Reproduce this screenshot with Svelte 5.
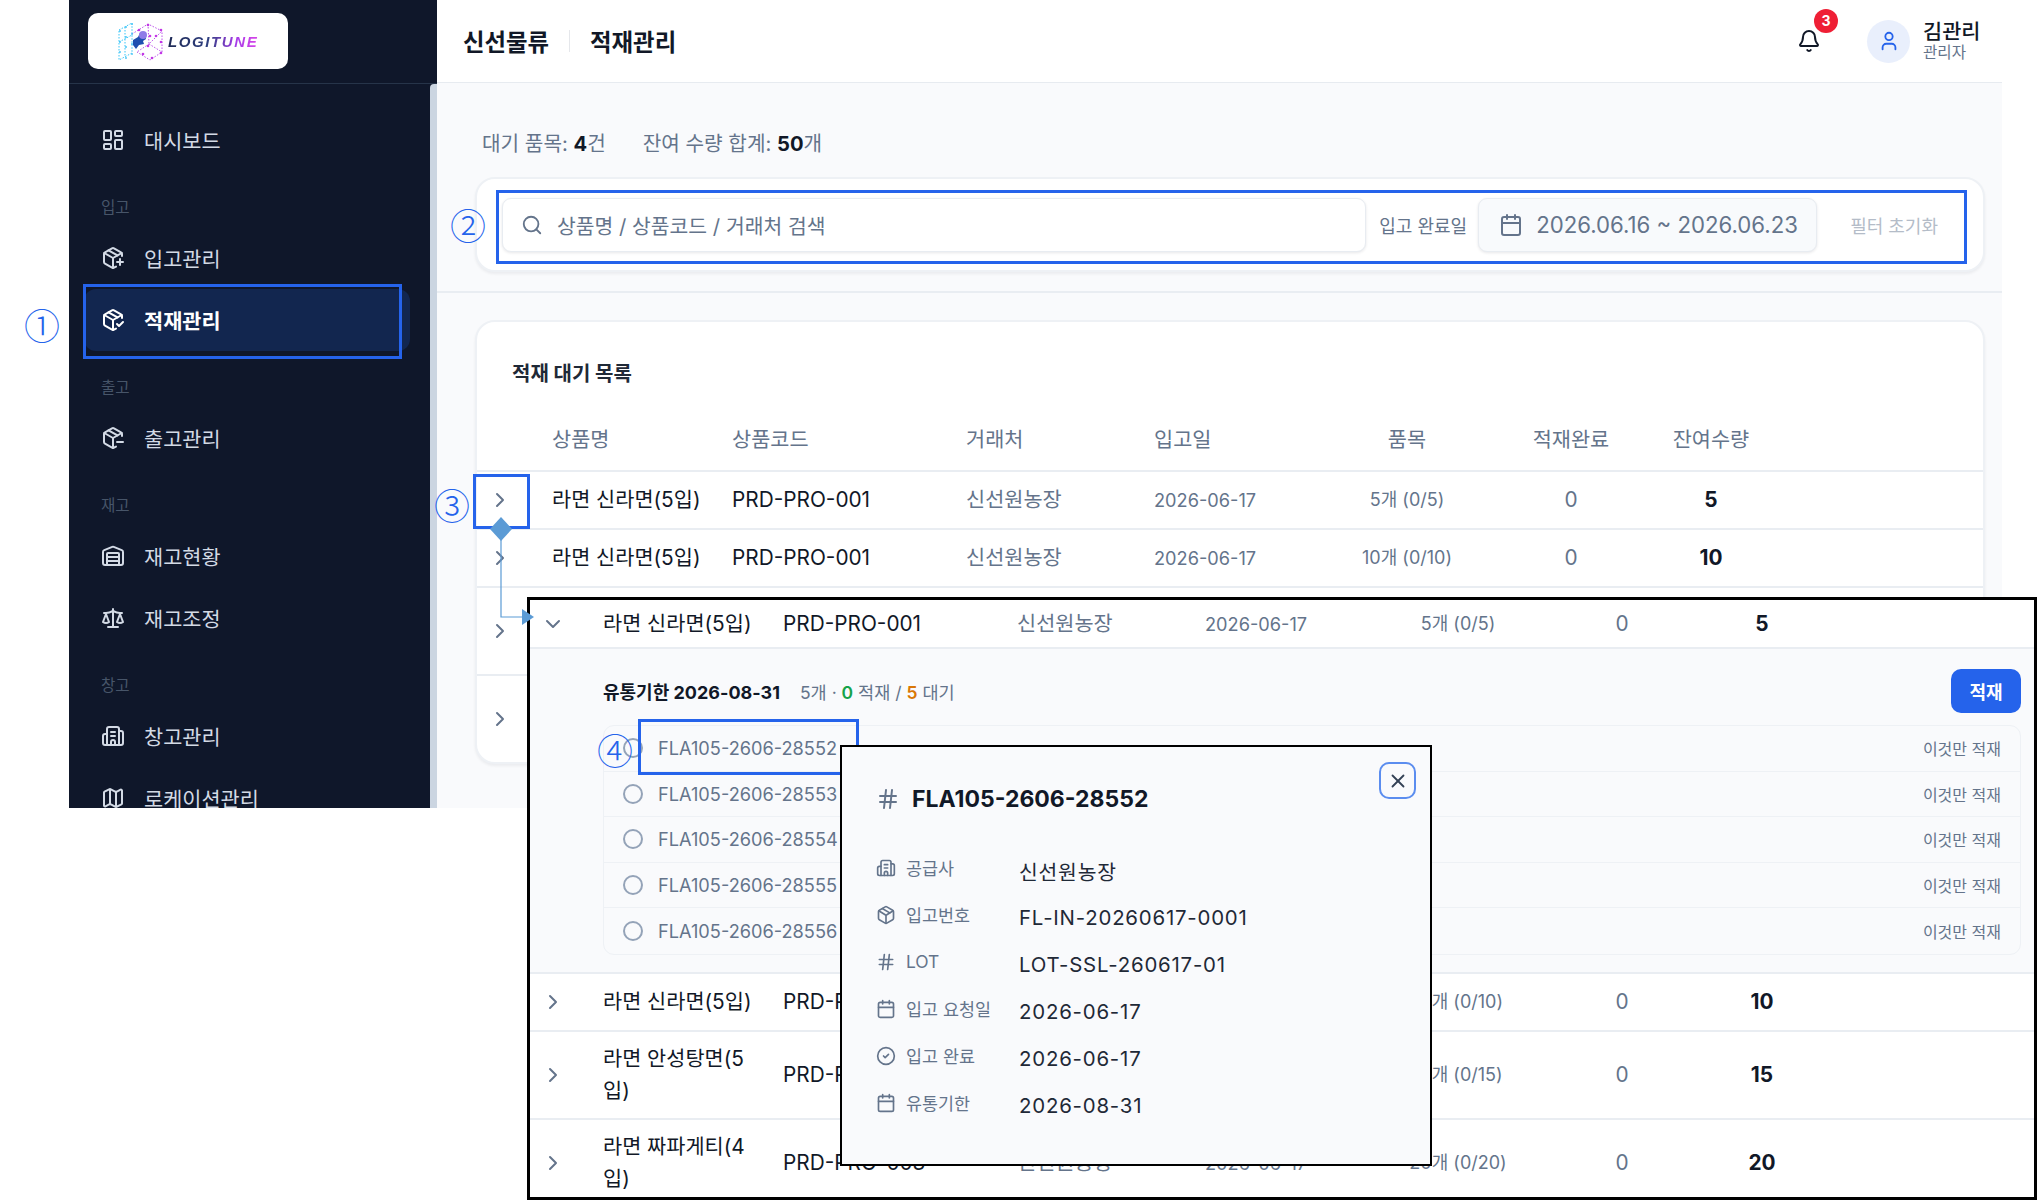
<script lang="ts">
    const paths: Record<string, string> = {
        dashboard: '<rect width="7" height="9" x="3" y="3" rx="1"/><rect width="7" height="5" x="14" y="3" rx="1"/><rect width="7" height="9" x="14" y="12" rx="1"/><rect width="7" height="5" x="3" y="16" rx="1"/>',
        packagePlus: '<path d="M16 16h6"/><path d="M19 13v6"/><path d="M21 10V8a2 2 0 0 0-1-1.73l-7-4a2 2 0 0 0-2 0l-7 4A2 2 0 0 0 3 8v8a2 2 0 0 0 1 1.73l7 4a2 2 0 0 0 2 0l2-1.14"/><path d="m7.5 4.27 9 5.15"/><polyline points="3.29 7 12 12 20.71 7"/><line x1="12" x2="12" y1="22" y2="12"/>',
        packageCheck: '<path d="m16 16 2 2 4-4"/><path d="M21 10V8a2 2 0 0 0-1-1.73l-7-4a2 2 0 0 0-2 0l-7 4A2 2 0 0 0 3 8v8a2 2 0 0 0 1 1.73l7 4a2 2 0 0 0 2 0l2-1.14"/><path d="m7.5 4.27 9 5.15"/><polyline points="3.29 7 12 12 20.71 7"/><line x1="12" x2="12" y1="22" y2="12"/>',
        packageMinus: '<path d="M16 16h6"/><path d="M21 10V8a2 2 0 0 0-1-1.73l-7-4a2 2 0 0 0-2 0l-7 4A2 2 0 0 0 3 8v8a2 2 0 0 0 1 1.73l7 4a2 2 0 0 0 2 0l2-1.14"/><path d="m7.5 4.27 9 5.15"/><polyline points="3.29 7 12 12 20.71 7"/><line x1="12" x2="12" y1="22" y2="12"/>',
        package: '<path d="M11 21.73a2 2 0 0 0 2 0l7-4A2 2 0 0 0 21 16V8a2 2 0 0 0-1-1.73l-7-4a2 2 0 0 0-2 0l-7 4A2 2 0 0 0 3 8v8a2 2 0 0 0 1 1.73z"/><path d="M12 22V12"/><path d="m3.3 7 7.703 4.734a2 2 0 0 0 1.994 0L20.7 7"/><path d="m7.5 4.27 9 5.15"/>',
        warehouse: '<path d="M18 21V10a1 1 0 0 0-1-1H7a1 1 0 0 0-1 1v11"/><path d="M22 19a2 2 0 0 1-2 2H4a2 2 0 0 1-2-2V8a2 2 0 0 1 1.26-1.86l8-3.2a2 2 0 0 1 1.48 0l8 3.2A2 2 0 0 1 22 8z"/><path d="M6 13h12"/><path d="M6 17h12"/>',
        scale: '<path d="m16 16 3-8 3 8c-.87.65-1.92 1-3 1s-2.13-.35-3-1Z"/><path d="m2 16 3-8 3 8c-.87.65-1.92 1-3 1s-2.13-.35-3-1Z"/><path d="M7 21h10"/><path d="M12 3v18"/><path d="M3 7h2c2 0 5-1 7-2 2 1 5 2 7 2h2"/>',
        building: '<path d="M10 12h4"/><path d="M10 8h4"/><path d="M14 21v-3a2 2 0 0 0-4 0v3"/><path d="M6 10H4a2 2 0 0 0-2 2v7a2 2 0 0 0 2 2h16a2 2 0 0 0 2-2V9a2 2 0 0 0-2-2h-2"/><path d="M6 21V5a2 2 0 0 1 2-2h8a2 2 0 0 1 2 2v16"/>',
        map: '<path d="M14.106 5.553a2 2 0 0 0 1.788 0l3.659-1.83A1 1 0 0 1 21 4.619v12.764a1 1 0 0 1-.553.894l-4.553 2.277a2 2 0 0 1-1.788 0l-4.212-2.106a2 2 0 0 0-1.788 0l-3.659 1.83A1 1 0 0 1 3 19.381V6.618a1 1 0 0 1 .553-.894l4.553-2.277a2 2 0 0 1 1.788 0z"/><path d="M15 5.764v15"/><path d="M9 3.236v15"/>',
        search: '<circle cx="11" cy="11" r="8"/><path d="m21 21-4.3-4.3"/>',
        calendar: '<path d="M8 2v4"/><path d="M16 2v4"/><rect width="18" height="18" x="3" y="4" rx="2"/><path d="M3 10h18"/>',
        bell: '<path d="M10.268 21a2 2 0 0 0 3.464 0"/><path d="M3.262 15.326A1 1 0 0 0 4 17h16a1 1 0 0 0 .74-1.673C19.41 13.956 18 12.499 18 8A6 6 0 0 0 6 8c0 4.499-1.411 5.956-2.738 7.326"/>',
        user: '<path d="M19 21v-2a4 4 0 0 0-4-4H9a4 4 0 0 0-4 4v2"/><circle cx="12" cy="7" r="4"/>',
        hash: '<line x1="4" x2="20" y1="9" y2="9"/><line x1="4" x2="20" y1="15" y2="15"/><line x1="10" x2="8" y1="3" y2="21"/><line x1="16" x2="14" y1="3" y2="21"/>',
        x: '<path d="M18 6 6 18"/><path d="m6 6 12 12"/>',
        right: '<path d="m9 18 6-6-6-6"/>',
        down: '<path d="m6 9 6 6 6-6"/>',
        check: '<circle cx="12" cy="12" r="10"/><path d="m9 12 2 2 4-4"/>'
    };

    const nav = [
        { label: "대시보드", icon: "dashboard" },
        { group: "입고" },
        { label: "입고관리", icon: "packagePlus" },
        { label: "적재관리", icon: "packageCheck", active: true },
        { group: "출고" },
        { label: "출고관리", icon: "packageMinus" },
        { group: "재고" },
        { label: "재고현황", icon: "warehouse" },
        { label: "재고조정", icon: "scale" },
        { group: "창고" },
        { label: "창고관리", icon: "building" },
        { label: "로케이션관리", icon: "map" }
    ];

    const items = [
        { name: "라면 신라면(5입)", code: "PRD-PRO-001", qty: 5 },
        { name: "라면 신라면(5입)", code: "PRD-PRO-001", qty: 10 },
        { name: "라면 안성탕면(5입)", code: "PRD-PRO-002", qty: 15 },
        { name: "라면 짜파게티(4입)", code: "PRD-PRO-003", qty: 20 }
    ];

    const lots = ["28552", "28553", "28554", "28555", "28556"];

    const details = [
        { label: "공급사", icon: "building", value: "신선원농장" },
        { label: "입고번호", icon: "package", value: "FL-IN-20260617-0001" },
        { label: "LOT", icon: "hash", value: "LOT-SSL-260617-01" },
        { label: "입고 요청일", icon: "calendar", value: "2026-06-17" },
        { label: "입고 완료", icon: "check", value: "2026-06-17" },
        { label: "유통기한", icon: "calendar", value: "2026-08-31" }
    ];

    // 로고 격자의 점
    const leftDots = [[3, 9], [3, 20], [3, 30], [9, 5], [9, 15], [9, 25], [9, 36], [15, 2], [15, 12], [15, 22], [15, 32]];
    const rightDots = [[22, 8], [26, 32], [31, 3], [31, 24], [35, 36], [39, 14], [44, 8], [44, 20], [44, 31], [33, 14]];
</script>

{#snippet icon(name: string, cls: string)}
    <svg class="icon {cls}" viewBox="0 0 24 24" fill="none" stroke="currentColor" stroke-width="2" stroke-linecap="round" stroke-linejoin="round">{@html paths[name]}</svg>
{/snippet}

{#snippet row(item: typeof items[number], open: boolean)}
    <div class="row">
        <span class="chev">{@render icon(open ? "down" : "right", "i24")}</span>
        <span class="name">{item.name}</span>
        <span class="code">{item.code}</span>
        <span class="vendor">신선원농장</span>
        <span class="date">2026-06-17</span>
        <span class="ctr qty">{item.qty}개 (0/{item.qty})</span>
        <span class="ctr done">0</span>
        <span class="ctr rest">{item.qty}</span>
    </div>
{/snippet}

<div class="stage">
    <div class="app">
        <aside class="sidebar">
            <div class="brand">
                <div class="logo">
                    <svg class="cube" viewBox="0 0 46 39" fill="none">
                        <path stroke="#38c6f8" stroke-width="1" stroke-dasharray="1.5 1.5" d="M2 8 15 1V31L2 38ZM2 20 15 13M8 5V34" />
                        <path stroke="#bb55ea" stroke-width="1" stroke-dasharray="1.5 1.5" d="M15 12 31 2 45 9V30L33 38 20 30M31 2 32 22 45 9M32 22 20 30M32 22 45 30" />
                        {#each leftDots as [cx, cy]}
                            <circle {cx} {cy} r="0.9" fill="#3fc4f7" />
                        {/each}
                        {#each rightDots as [cx, cy]}
                            <circle {cx} {cy} r="1.3" fill="#c237e6" />
                        {/each}
                        <path fill="#1f4fb0" d="M16 18l5-3 2-4 5 1 1 5-3 2 1 3-5 1-3 4-3-4z" />
                        <circle cx="26" cy="13" r="4" fill="#8f7ce8" />
                    </svg>
                    <span class="wordmark">LOGITUNE</span>
                </div>
            </div>
            <div class="navwrap">
                <nav class="nav">
                    {#each nav as entry}
                        {#if entry.group}
                            <div class="group">{entry.group}</div>
                        {:else}
                            <div class="item" class:active={entry.active}>
                                {@render icon(entry.icon ?? "", "i24")}
                                <span>{entry.label}</span>
                            </div>
                        {/if}
                    {/each}
                </nav>
                <div class="scrollbar"></div>
            </div>
        </aside>

        <main class="main">
            <header class="topbar">
                <div class="crumbs">
                    <span>신선물류</span>
                    <i></i>
                    <span>적재관리</span>
                </div>
                <div class="bell">
                    {@render icon("bell", "i24")}
                    <b class="badge">3</b>
                </div>
                <div class="avatar">{@render icon("user", "i22")}</div>
                <div class="who">
                    <strong>김관리</strong>
                    <small>관리자</small>
                </div>
            </header>

            <section class="filters">
                <div class="stats">
                    <span>대기 품목: <b>4</b>건</span>
                    <span>잔여 수량 합계: <b>50</b>개</span>
                </div>
                <div class="filtercard">
                    <div class="search">
                        {@render icon("search", "i22")}
                        <span>상품명 / 상품코드 / 거래처 검색</span>
                    </div>
                    <span class="flabel">입고 완료일</span>
                    <div class="range">
                        {@render icon("calendar", "i24")}
                        <span>2026.06.16 ~ 2026.06.23</span>
                    </div>
                    <span class="reset">필터 초기화</span>
                </div>
            </section>

            <section class="tablewrap">
                <div class="tablecard">
                    <h2>적재 대기 목록</h2>
                    <div class="row head">
                        <span></span>
                        <span>상품명</span>
                        <span>상품코드</span>
                        <span>거래처</span>
                        <span>입고일</span>
                        <span class="ctr">품목</span>
                        <span class="ctr">적재완료</span>
                        <span class="ctr">잔여수량</span>
                    </div>
                    {#each items as item}
                        {@render row(item, false)}
                    {/each}
                </div>
            </section>
        </main>
    </div>

    <!-- 확대 패널 -->
    <div class="panel">
        {@render row(items[0], true)}
        <div class="expand">
            <div class="expandhead">
                <strong>유통기한 2026-08-31</strong>
                <span class="counts">5개 · <em class="green">0</em> 적재 / <em class="orange">5</em> 대기</span>
                <button class="stack">적재</button>
            </div>
            <div class="lots">
                {#each lots as lot}
                    <div class="lot">
                        <span class="radio"></span>
                        <span class="lotno">FLA105-2606-{lot}</span>
                        <span class="only">이것만 적재</span>
                    </div>
                {/each}
            </div>
        </div>
        {#each items.slice(1) as item}
            {@render row(item, false)}
        {/each}
    </div>

    <!-- 주석 표시 -->
    <span class="box b1"></span>
    <span class="box b2"></span>
    <span class="box b3"></span>
    <span class="box b4"></span>
    <span class="num n1">①</span>
    <span class="num n2">②</span>
    <span class="num n3">③</span>
    <span class="num n4">④</span>
    <svg class="connector" viewBox="0 0 48 110" fill="none">
        <path d="M14 12V100H40" stroke="#5b9bd5" stroke-width="1.2" />
        <path d="M14 0 25 12 14 24 3 12Z" fill="#5b9bd5" />
        <path d="M35 92 47 100 35 108Z" fill="#5b9bd5" />
    </svg>

    <div class="modal">
        <button class="close">{@render icon("x", "i22")}</button>
        <div class="mtitle">
            {@render icon("hash", "i24")}
            <span>FLA105-2606-28552</span>
        </div>
        <dl class="mrows">
            {#each details as d}
                <dt>{@render icon(d.icon, "i20")}{d.label}</dt>
                <dd>{d.value}</dd>
            {/each}
        </dl>
    </div>
</div>

<style>
    :global(body) {
        margin: 0;
        background: #fff;
    }

    .stage {
        position: relative;
        width: 2037px;
        height: 1200px;
        overflow: hidden;
        font-family: Inter, "Noto Sans CJK KR", sans-serif;
        color: #111827;
    }

    .icon {
        display: block;
        flex: none;
    }
    .i20 { width: 20px; height: 20px; }
    .i22 { width: 22px; height: 22px; }
    .i24 { width: 24px; height: 24px; }

    .app {
        display: flex;
        width: 1933px;
        height: 808px;
        margin-left: 69px;
        overflow: hidden;
    }

    /* sidebar */
    .sidebar {
        width: 368px;
        flex: none;
        display: flex;
        flex-direction: column;
        background: #0f172a;
    }
    .brand {
        height: 84px;
        flex: none;
        box-sizing: border-box;
        padding: 13px 0 0 19px;
        border-bottom: 1px solid #263449;
    }
    .logo {
        width: 200px;
        height: 56px;
        box-sizing: border-box;
        padding-left: 29px;
        display: flex;
        align-items: center;
        gap: 5px;
        background: #fff;
        border-radius: 10px;
    }
    .cube {
        width: 46px;
        height: 39px;
    }
    .wordmark {
        font-family: "Liberation Sans", sans-serif;
        font-size: 15px;
        font-weight: 700;
        font-style: italic;
        letter-spacing: 1.6px;
        background: linear-gradient(90deg, #1e2a55 0%, #2f3f80 45%, #a53be8 75%, #d845e8 100%);
        -webkit-background-clip: text;
        background-clip: text;
        color: transparent;
    }
    .navwrap {
        flex: 1;
        display: flex;
        min-height: 0;
    }
    .nav {
        flex: 1;
        padding: 25px 20px 0 15px;
    }
    .scrollbar {
        width: 7px;
        background: #cbd5e1;
        border-radius: 4px 0 0 0;
    }
    .item {
        height: 62px;
        display: flex;
        align-items: center;
        gap: 19px;
        padding-left: 17px;
        font-size: 20.8px;
        color: #d3dae5;
        border-radius: 12px;
    }
    .item.active {
        background: #12264f;
        color: #fff;
        font-weight: 700;
    }
    .group {
        height: 24px;
        margin: 25px 0 7px;
        padding-left: 17px;
        line-height: 24px;
        font-size: 15.6px;
        color: #475569;
    }

    /* main */
    .main {
        flex: 1;
        min-width: 0;
        background: #f9fafc;
    }
    .topbar {
        height: 83px;
        box-sizing: border-box;
        display: flex;
        align-items: center;
        padding-left: 26px;
        background: #fff;
        border-bottom: 1px solid #e7ebf0;
    }
    .crumbs {
        flex: 1;
        display: flex;
        align-items: center;
        gap: 20px;
        font-size: 23.4px;
        font-weight: 700;
    }
    .crumbs i {
        width: 1px;
        height: 22px;
        background: #e5e7eb;
    }
    .bell {
        position: relative;
        margin-right: 46px;
    }
    .badge {
        position: absolute;
        top: -20px;
        left: 17px;
        width: 24px;
        height: 24px;
        border-radius: 50%;
        background: #ef1f35;
        color: #fff;
        font-size: 14px;
        line-height: 24px;
        text-align: center;
    }
    .avatar {
        width: 43px;
        height: 43px;
        margin-right: 13px;
        display: flex;
        align-items: center;
        justify-content: center;
        border-radius: 50%;
        background: #e9effc;
        color: #2563eb;
    }
    .who {
        width: 79px;
        display: flex;
        flex-direction: column;
        line-height: 1.1;
    }
    .who strong {
        font-size: 20.8px;
        font-weight: 500;
    }
    .who small {
        font-size: 15.6px;
        color: #64748b;
    }

    .filters {
        padding: 48px 17px 19px 38px;
        border-bottom: 2px solid #e9edf2;
    }
    .stats {
        display: flex;
        gap: 37px;
        padding-left: 7px;
        font-size: 20.2px;
        color: #64748b;
        height: 26px;
        line-height: 26px;
    }
    .stats b {
        color: #111827;
    }
    .filtercard {
        margin-top: 20px;
        height: 95px;
        box-sizing: border-box;
        padding-left: 25px;
        display: flex;
        align-items: center;
        background: #fff;
        border: 2px solid #eef1f5;
        border-radius: 20px;
        box-shadow: 0 2px 3px rgba(15, 23, 42, 0.06);
    }
    .search {
        flex: 1;
        height: 54px;
        box-sizing: border-box;
        display: flex;
        align-items: center;
        gap: 14px;
        padding-left: 18px;
        font-size: 20.4px;
        color: #64748b;
        background: #fff;
        border: 1px solid #e8ecf1;
        border-radius: 9px;
        box-shadow: 0 1px 3px rgba(15, 23, 42, 0.1);
    }
    .flabel {
        margin: 0 11px 0 13px;
        font-size: 18px;
        white-space: nowrap;
        color: #64748b;
    }
    .range {
        width: 339px;
        height: 54px;
        flex: none;
        box-sizing: border-box;
        display: flex;
        align-items: center;
        gap: 13px;
        padding-left: 20px;
        font-size: 22.2px;
        white-space: nowrap;
        color: #64748b;
        background: #f8fafc;
        border: 1px solid #e8ecf1;
        border-radius: 9px;
        box-shadow: 0 1px 3px rgba(15, 23, 42, 0.1);
    }
    .reset {
        margin: 0 45px 0 33px;
        font-size: 18px;
        white-space: nowrap;
        color: #b4bcc8;
    }

    .tablewrap {
        padding: 27px 17px 0 38px;
    }
    .tablecard {
        background: #fff;
        border: 2px solid #eef1f5;
        border-radius: 20px;
        box-shadow: 0 2px 3px rgba(15, 23, 42, 0.06);
    }
    h2 {
        margin: 0;
        padding: 40px 0 0 35px;
        height: 47px;
        font-size: 20px;
        line-height: 25px;
        font-weight: 700;
        color: #1f2937;
    }

    .row {
        --lead: 75px;
        display: grid;
        grid-template-columns: var(--lead) 180px 234px 188px 167px 172px 156px 124px 1fr;
        align-items: center;
        box-sizing: border-box;
        min-height: 58px;
        padding: 11px 0;
        border-bottom: 2px solid #e9edf2;
        font-size: 20.8px;
        line-height: 32px;
        color: #111827;
    }
    .panel .row {
        --lead: 73px;
    }
    .row.head {
        height: 63px;
        color: #64748b;
    }
    .tablecard .row:last-child {
        border-bottom: none;
    }
    .chev {
        display: flex;
        padding-left: 11px;
        color: #64748b;
    }
    .name {
        padding-right: 24px;
    }
    .vendor {
        color: #64748b;
    }
    .date {
        font-size: 18.2px;
        color: #64748b;
    }
    .ctr {
        text-align: center;
    }
    .qty {
        font-size: 18px;
        color: #64748b;
    }
    .done {
        color: #64748b;
    }
    .rest {
        font-weight: 700;
    }

    /* 확대 패널 */
    .panel {
        position: absolute;
        left: 527px;
        top: 597px;
        width: 1510px;
        height: 603px;
        box-sizing: border-box;
        background: #fff;
        border: 3px solid #000;
        overflow: hidden;
    }
    .panel > .row:first-child {
        min-height: 49px;
        padding: 0;
    }
    .expand {
        height: 325px;
        box-sizing: border-box;
        padding: 20px 13px 0 73px;
        background: #f9fafc;
        border-bottom: 2px solid #e9edf2;
    }
    .expandhead {
        height: 44px;
        display: flex;
        align-items: center;
        font-size: 18px;
    }
    .counts {
        margin-left: 20px;
        flex: 1;
        font-size: 17.5px;
        color: #64748b;
    }
    em {
        font-style: normal;
        font-weight: 600;
    }
    .green { color: #16a34a; }
    .orange { color: #d97706; }
    .stack {
        width: 70px;
        height: 44px;
        border: none;
        border-radius: 10px;
        background: #2563eb;
        color: #fff;
        font: inherit;
        font-weight: 600;
    }
    .lots {
        margin-top: 12px;
        background: #f9fafc;
        border: 1px solid #eef1f5;
        border-radius: 11px;
    }
    .lot {
        height: 45.5px;
        box-sizing: border-box;
        display: flex;
        align-items: center;
        padding: 0 19px;
        border-bottom: 1px solid #eef1f5;
        font-size: 18.2px;
        color: #64748b;
    }
    .lot:last-child {
        border-bottom: none;
    }
    .radio {
        width: 16px;
        height: 16px;
        border: 2px solid #94a3b8;
        border-radius: 50%;
        margin-right: 15px;
    }
    .lotno {
        flex: 1;
    }
    .only {
        font-size: 16px;
    }

    /* 주석 */
    .box {
        position: absolute;
        box-sizing: border-box;
        border: 3px solid #2563eb;
    }
    .b1 { left: 83px; top: 284px; width: 319px; height: 75px; }
    .b2 { left: 496px; top: 190px; width: 1471px; height: 74px; }
    .b3 { left: 473px; top: 474px; width: 57px; height: 55px; }
    .b4 { left: 638px; top: 719px; width: 221px; height: 56px; }
    .num {
        position: absolute;
        transform: translate(-50%, -50%);
        font-family: "Noto Sans CJK KR", sans-serif;
        font-weight: 300;
        font-size: 36px;
        line-height: 1;
        color: #2563eb;
    }
    .n1 { left: 42px; top: 324px; }
    .n2 { left: 468px; top: 224px; }
    .n3 { left: 452px; top: 504px; }
    .n4 { left: 615px; top: 749px; }
    .connector {
        position: absolute;
        left: 487px;
        top: 517px;
        width: 48px;
        height: 110px;
    }

    /* 상세 모달 */
    .modal {
        position: absolute;
        left: 840px;
        top: 745px;
        width: 592px;
        height: 421px;
        box-sizing: border-box;
        padding: 38px 0 0 34px;
        background: #f9fafc;
        border: 2px solid #000;
    }
    .close {
        position: absolute;
        top: 15px;
        right: 14px;
        width: 37px;
        height: 37px;
        padding: 0;
        display: flex;
        align-items: center;
        justify-content: center;
        background: #f9fafc;
        border: 2px solid #5b8def;
        border-radius: 10px;
        color: #334155;
    }
    .mtitle {
        display: flex;
        align-items: center;
        gap: 12px;
        font-size: 23px;
        font-weight: 700;
        height: 28px;
    }
    .mtitle .icon {
        color: #64748b;
    }
    .mrows {
        margin: 34px 0 0;
        display: grid;
        grid-template-columns: 143px 1fr;
        grid-auto-rows: 47px;
        align-items: center;
    }
    dt {
        display: flex;
        align-items: center;
        gap: 10px;
        margin-top: -6px;
        font-size: 17.4px;
        white-space: nowrap;
        color: #64748b;
    }
    dd {
        margin: 0;
        font-size: 20.4px;
        letter-spacing: 0.8px;
        color: #1f2937;
    }
</style>
